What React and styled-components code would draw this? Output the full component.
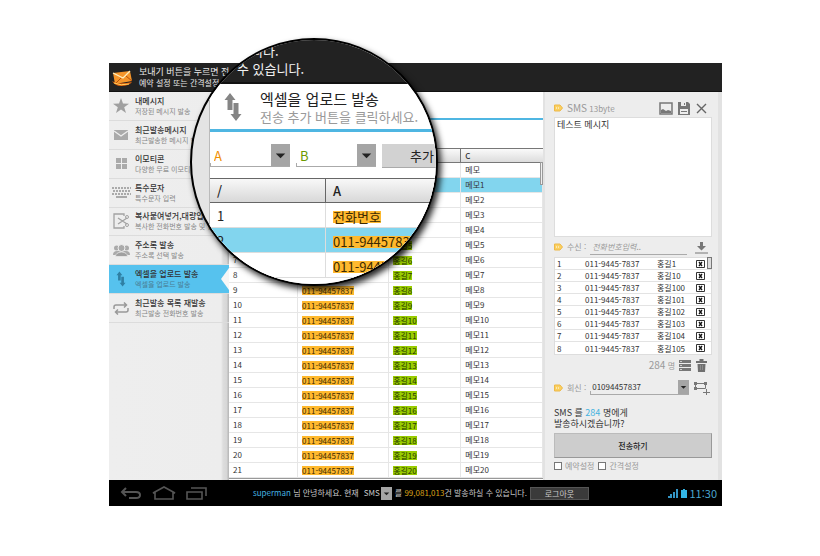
import React from "react";
import styled, { createGlobalStyle } from "styled-components";

const GlobalStyle = createGlobalStyle`
  * { box-sizing: border-box; }
  body { margin: 0; background: #fff; }
  body, button, input, select, textarea {
    font-family: "Noto Sans CJK KR", "Noto Sans", sans-serif;
    font-size: 8px;
    line-height: 12px;
  }
  button, input, select, textarea { margin: 0; padding: 0; border: 0; border-radius: 0; color: inherit; }
  button { cursor: pointer; background: none; }
`;

const Page = styled.div`
  padding: 63px 98px 48px 109px;
`;
const Device = styled.div`
  position: relative;
  color: #333;
`;
const TopBar = styled.header`
  display: flex;
  align-items: center;
  gap: 6px;
  height: 29px;
  padding: 0 3px;
  background: #222;
  border-bottom: 1px solid #111;
  color: #e8e8e8;
  p { margin: 0; line-height: 11px; }
  p:first-child { font-size: 9px; }
`;
const Body = styled.div`
  display: grid;
  grid-template-columns: 120px minmax(0, 1fr) 179px;
  min-height: 388px;
`;

/* Sidebar */
const Sidebar = styled.nav`
  background: linear-gradient(90deg, #eee 0, #ededed 112px, #ddd 114px, #d6d6d6 118px, #bbb 119px);
`;
const Menu = styled.ul`
  display: grid;
  grid-template-rows: repeat(8, 1fr);
  height: 231px;
  margin: 0;
  padding: 0;
  list-style: none;
`;
const MenuItem = styled.li`
  position: relative;
  overflow: hidden;
  border-bottom: 1px solid #dcdcdc;
  background: ${(p) => (p.$active ? "#56c2ee" : "transparent")};
  ${(p) => p.$active && `
    &::after {
      content: "";
      position: absolute;
      right: 0;
      top: 3px;
      border: solid transparent;
      border-width: 11px 8px 11px 0;
      border-right-color: #f6f6f6;
    }
  `}
`;
const MenuLink = styled.a`
  display: grid;
  grid-template-columns: 20px 1fr;
  gap: 4px;
  align-items: center;
  height: 100%;
  padding: 0 8px 0 2px;
  color: #333;
  text-decoration: none;
  white-space: nowrap;
  svg { justify-self: center; }
  strong, small { display: block; line-height: 11px; }
  strong { font-size: 8px; font-weight: 500; }
  small { font-size: 7px; color: ${(p) => (p.$active ? "#4a7d94" : "#888")}; }
`;

/* Sheet */
const Main = styled.main`
  background: #fff;
`;
const SheetHead = styled.div`
  height: 28px;
  border-bottom: 2px solid #4fb6e2;
`;
const SheetTools = styled.div`
  height: 28px;
`;
const Sheet = styled.table`
  width: 100%;
  table-layout: fixed;
  border-collapse: separate;
  border-spacing: 0;
  border-bottom: 1px solid #999;
  th {
    height: 15px;
    padding: 0 0 0 4px;
    border-top: 1px solid #777;
    border-bottom: 1px solid #777;
    border-right: 1px solid #777;
    background: linear-gradient(#fafafa, #dcdcdc);
    text-align: left;
    font-size: 8px;
    line-height: 12px;
    font-weight: 500;
  }
  th:last-child { border-right: 0; }
  td {
    height: 15px;
    padding: 0 0 0 4px;
    border-right: 1px solid #e6e6e6;
    border-bottom: 1px solid #e6e6e6;
    line-height: 12px;
    white-space: nowrap;
  }
`;
const Row = styled.tr`
  background: ${(p) => (p.$selected ? "#82d5ee" : "#fff")};
`;
const Mark = styled.span`
  display: inline-block;
  line-height: ${(p) => (p.$large ? "12px" : "9px")};
  vertical-align: middle;
  background: ${(p) => (p.$green ? "#99cc00" : "#ffb92e")};
  color: ${(p) => (p.$green ? "#263800" : "#3c2900")};
`;
const Thumb = styled.span`
  position: absolute;
  right: 179px;
  top: 99px;
  width: 3px;
  height: 23px;
  background: #eee;
  border: 1px solid #999;
`;

/* Composer */
const Composer = styled.aside`
  display: flex;
  flex-direction: column;
  padding: 7px 6px 0 9px;
  border-left: 2px solid #e2e2e2;
  border-right: 4px solid #e2e2e2;
  background: #ededed;
  color: #999;
`;
const Line = styled.div`
  display: flex;
  align-items: center;
  gap: 4px;
  height: ${(p) => p.$h}px;
  padding-right: ${(p) => p.$end || 0}px;
  flex: none;
  white-space: nowrap;
`;
const Push = styled.span`
  margin-left: auto;
`;
const Size = styled.span`
  font-size: ${(p) => p.$px}px;
`;
const IconButton = styled.button`
  display: flex;
  color: #777;
`;
const Message = styled.textarea`
  height: 120px;
  padding: 0 2px;
  border: 1px solid #ddd;
  background: #fff;
  color: #333;
  font-size: 9px;
  line-height: 13px;
  resize: none;
`;
const Field = styled.div`
  flex: 1;
  display: flex;
  height: 15px;
  margin-right: 4px;
  border-bottom: 1px solid #aaa;
  color: #333;
  input { flex: 1; min-width: 0; padding-left: 2px; background: none; }
  input::placeholder { color: #999; font-style: italic; }
`;
const Recipients = styled.table`
  border: 1px solid #ddd;
  border-spacing: 0;
  table-layout: fixed;
  background: #fff;
  color: #333;
  td { height: 12px; padding: 0 0 0 2px; line-height: 11px; border-bottom: 1px solid #e3e3e3; }
  tr:last-child td { border-bottom: 0; }
`;
const ListBox = styled.div`
  position: relative;
  display: grid;
  &::after {
    content: "";
    position: absolute;
    right: 0;
    top: 0;
    width: 3px;
    height: 10px;
    border: 1px solid #777;
    background: #ddd;
  }
`;
const Remove = styled.button`
  display: block;
  svg { display: block; }
`;
const Ask = styled.p`
  margin: 7px 0 4px;
  color: #333;
  font-size: 9px;
  line-height: 11px;
`;
const Accent = styled.span`
  color: ${(p) => (p.$gold ? "#d9a017" : "#45b3e0")};
`;
const SendButton = styled.button`
  height: 25px;
  flex: none;
  border: 1px solid #bbb;
  border-right-color: #999;
  border-bottom-color: #999;
  background: #cdcdcd;
  color: #222;
  font-weight: 500;
`;
const Check = styled.label`
  display: flex;
  align-items: center;
  gap: 3px;
  input { appearance: none; width: 8px; height: 8px; border: 1px solid #777; background: #fff; }
`;

/* Drop-down with a square arrow block */
const DropBox = styled.span`
  position: relative;
  display: flex;
  flex: ${(p) => (p.$w ? "none" : 1)};
  width: ${(p) => (p.$w ? `${p.$w}px` : "auto")};
  height: ${(p) => p.$h}px;
  border-bottom: ${(p) => (p.$line ? "1px solid #aaa" : "0")};
  &::before {
    content: "";
    position: absolute;
    left: 0;
    bottom: 0;
    width: 1px;
    height: 3px;
    background: #aaa;
  }
  select {
    flex: 1;
    min-width: 0;
    width: 100%;
    appearance: none;
    padding-left: ${(p) => p.$pad}px;
    background: none;
    color: ${(p) => p.$color};
    font-size: ${(p) => p.$font}px;
    line-height: ${(p) => p.$font + 4}px;
  }
  svg {
    position: absolute;
    right: 0;
    top: 0;
    height: 100%;
    width: ${(p) => p.$arrow}px;
    background: #a5a5a5;
    pointer-events: none;
  }
`;

/* System bar */
const SystemBar = styled.footer`
  display: flex;
  align-items: center;
  height: 26px;
  padding: 0 5px 0 11px;
  background: #000;
  color: #c8c8c8;
  white-space: nowrap;
`;
const NavKeys = styled.div`
  display: flex;
  gap: 10px;
  width: 133px;
  flex: none;
`;
const Status = styled.div`
  display: flex;
  align-items: center;
`;
const SmsPick = styled.span`
  display: flex;
  align-items: center;
  gap: 1px;
  margin: 0 3px 0 5px;
`;
const LogoutButton = styled.button`
  width: 59px;
  height: 13px;
  margin-left: 3px;
  border: 1px solid #555;
  background: #3a3a3a;
  line-height: 11px;
`;
const Tray = styled.div`
  display: flex;
  align-items: center;
  gap: 3px;
  margin-left: auto;
  color: #4aa6cf;
  font-size: 11px;
`;

/* Magnifier */
const Lens = styled.section`
  position: absolute;
  left: 81px;
  top: -25px;
  width: 248px;
  height: 248px;
  overflow: hidden;
  border: 2px solid #000;
  border-radius: 50%;
  background: #e4e4e4;
  box-shadow: 3px 4px 6px rgba(0, 0, 0, 0.85);
  color: #222;
  font-size: 13px;
`;
const LensBar = styled.div`
  height: 44px;
  padding: 2px 0 0 45px;
  background: #222;
  border-bottom: 2px solid #111;
  color: #f2f2f2;
  p { margin: 0; line-height: 18px; }
  p:first-child { padding-left: 14px; }
`;
const LensPanel = styled.div`
  margin-left: 17px;
  border-left: 1px solid #bbb;
  background: #fff;
`;
const LensTitle = styled.div`
  display: flex;
  gap: 17px;
  height: 48px;
  padding: 6px 0 0 13px;
  border-bottom: 3px solid #4fb6e2;
  white-space: nowrap;
  svg { margin-top: 2px; }
  h2 { margin: 0; font-size: 15px; line-height: 18px; font-weight: 400; }
  p { margin: 0; line-height: 18px; color: #999; }
`;
const LensTools = styled.div`
  display: flex;
  gap: 6px;
  height: 46px;
  padding-top: 12px;
`;
const AddButton = styled.button`
  flex: none;
  width: 80px;
  height: 24px;
  background: #d2d2d2;
  border-bottom: 1px solid #aaa;
  font-size: 13px;
`;
const LensTable = styled.table`
  width: 100%;
  table-layout: fixed;
  border-spacing: 0;
  th {
    height: 25px;
    padding: 0 0 0 7px;
    border: solid #666;
    border-width: 1px 1px 1px 0;
    background: linear-gradient(#f8f8f8, #d8d8d8);
    font-size: 13px;
    font-weight: 500;
    line-height: 16px;
    text-align: left;
  }
  td {
    height: 25px;
    padding: 1px 0 0 7px;
    border-right: 1px solid #ddd;
    border-bottom: 1px solid #ddd;
    font-size: 13px;
    line-height: 16px;
    white-space: nowrap;
  }
`;

const LensFill = styled.div`
  height: 40px;
`;

const Svg = ({ w, h, children, ...rest }) => (
  <svg width={w} height={h} viewBox={`0 0 ${w} ${h}`} fill="none" aria-hidden="true" {...rest}>{children}</svg>
);

const Arrow = () => (
  <svg viewBox="0 0 12 12" aria-hidden="true"><path d="M3 5h6L6 8z" fill="#222" /></svg>
);
const SwapIcon = ({ w = 10, h = 16, color = "#2f7fa3" }) => (
  <svg width={w} height={h} viewBox="0 0 18 30" aria-hidden="true">
    <path d="M6 1l5.500 7H8.500v10h-5V8H.5zM12 29l-5.500-7h3V11h5v11h3z" fill={color} />
  </svg>
);
const Tag = () => (
  <Svg w={9} h={8}><path d="M0.500 1h5.500l2.500 3-2.500 3H.5z" fill="#fbd05f" stroke="#edb94a" /><path d="M2 4h3" stroke="#fff" strokeDasharray="1 1" /></Svg>
);

const menuIcons = {
  star: <Svg w={16} h={15}><path d="M8 0l2 5.500 6 .2-4.800 3.500L13 15l-5-3.400L3 15l1.800-5.800L0 5.700l6-.2z" fill="#a0a0a0" /></Svg>,
  mail: <Svg w={14} h={10}><path d="M0 0h14v10H0z" fill="#aaa" /><path d="M0 1l7 5 7-5" stroke="#eee" strokeWidth="1.400" /></Svg>,
  grid: <Svg w={11} h={11}><path d="M0 0h5v5H0zM6 0h5v5H6zM0 6h5v5H0zM6 6h5v5H6z" fill="#aaa" /></Svg>,
  keys: <Svg w={19} h={11}><path d="M0 1h19M1 4h18M0 7h19" stroke="#aaa" strokeWidth="2" strokeDasharray="2 1" /><path d="M4 10h11" stroke="#aaa" strokeWidth="2" /></Svg>,
  cut: <Svg w={16} h={16} stroke="#a2a2a2"><path d="M11 3V1H1v14h10v-2M5 5l9 6M5 11l9-6" strokeWidth="1.300" /><circle cx="14" cy="4" r="1.500" /><circle cx="14" cy="12" r="1.500" /></Svg>,
  people: <Svg w={17} h={13}><circle cx="3.500" cy="4" r="2.500" fill="#aaa" /><circle cx="13.500" cy="4" r="2.500" fill="#aaa" /><path d="M0 11q0-4 4-4h9q4 0 4 4z" fill="#aaa" /><circle cx="8.500" cy="4" r="3.500" fill="#aaa" stroke="#eee" /><path d="M2.500 12.500q0-4 6-4.500 6 .5 6 4.500z" fill="#a0a0a0" stroke="#eee" strokeWidth=".7" /></Svg>,
  swap: <SwapIcon />,
  repeat: <Svg w={16} h={13} stroke="#999" strokeWidth="1.500"><path d="M1 7V5q0-2 2-2h10M11 .5L13.500 3 11 5.500M15 6v2q0 2-2 2H3M5 7.500L2.500 10 5 12.500" /></Svg>,
};

const menu = [
  ["star", "내메시지", "저장된 메시지 발송"],
  ["mail", "최근발송메시지", "최근발송한 메시지 발송"],
  ["grid", "이모티콘", "다양한 무료 이모티콘"],
  ["keys", "특수문자", "특수문자 입력"],
  ["cut", "복사붙여넣거,대량입", "복사한 전화번호 발송 및 입"],
  ["people", "주소록 발송", "주소록 선택 발송"],
  ["swap", "엑셀을 업로드 발송", "엑셀을 업로드 발송"],
  ["repeat", "최근발송 목록 재발송", "최근발송 전화번호 발송"],
];

const rows = Array.from({ length: 21 }, (_, i) => ({
  phone: i ? "011-94457837" : "전화번호",
  name: i ? `홍길${i}` : "이름",
  memo: i ? `메모${i}` : "메모",
}));
rows.forEach((r, i) => { r.name = i > 0 ? `홍길${i}` : r.name; });

const recipients = [1, 10, 100, 101, 102, 103, 104, 105];

function SideMenu() {
  return (
    <Sidebar>
      <Menu>
        {menu.map(([icon, title, note]) => (
          <MenuItem key={icon} $active={icon === "swap"}>
            <MenuLink href="#" $active={icon === "swap"}>
              {menuIcons[icon]}
              <span><strong>{title}</strong><small>{note}</small></span>
            </MenuLink>
          </MenuItem>
        ))}
      </Menu>
    </Sidebar>
  );
}

function ExcelSheet() {
  return (
    <Main>
      <SheetHead />
      <SheetTools />
      <Sheet>
        <colgroup><col width="22%" /><col width="29%" /><col width="23%" /><col width="26%" /></colgroup>
        <thead><tr><th>/</th><th>A</th><th>B</th><th>C</th></tr></thead>
        <tbody>
          {rows.map((r, i) => (
            <Row key={i} $selected={i === 1}>
              <td>{i + 1}</td>
              <td><Mark>{r.phone}</Mark></td>
              <td><Mark $green>{r.name}</Mark></td>
              <td>{r.memo}</td>
            </Row>
          ))}
        </tbody>
      </Sheet>
    </Main>
  );
}

function MessageComposer() {
  return (
    <Composer>
      <Line $h={18} $end={4}>
        <Tag />
        <label htmlFor="message"><Size $px={10}>SMS</Size> 13byte</label>
        <Push />
        <IconButton aria-label="이미지">
          <Svg w={14} h={13}><path d="M1 1h12v11H1z" stroke="#777" strokeWidth="1.500" /><path d="M2 11V8l2-1 3 2 2-1 3 1v2z" fill="#777" /></Svg>
        </IconButton>
        <IconButton aria-label="저장">
          <Svg w={14} h={13}><path d="M1 0h10l2 2v11H1z" fill="#777" /><path d="M4 0h5v4H4zM3 7h8v5H3z" fill="#ededed" /><path d="M7 1h1v2H7zM4 9h6v1H4z" fill="#777" /></Svg>
        </IconButton>
        <IconButton aria-label="닫기">
          <Svg w={13} h={13}><path d="M2 2l9 9M11 2l-9 9" stroke="#666" strokeWidth="1.400" /></Svg>
        </IconButton>
      </Line>
      <Message id="message" defaultValue="테스트 메시지" />
      <Line $h={20} $end={4}>
        <Tag />
        <label htmlFor="receiver">수신 :</label>
        <Field><input id="receiver" placeholder="전화번호입력.." /></Field>
        <IconButton aria-label="추가">
          <Svg w={13} h={13}><path d="M5 1h3v4h3L6.500 9.500 2 5h3z" fill="#777" /><path d="M0 12h13" stroke="#777" /></Svg>
        </IconButton>
      </Line>
      <ListBox>
        <Recipients>
          <colgroup><col width="28" /><col width="72" /><col /><col width="17" /></colgroup>
          <tbody>
            {recipients.map((n, i) => (
              <tr key={n}>
                <td>{i + 1}</td>
                <td>011-9445-7837</td>
                <td>홍길{n}</td>
                <td>
                  <Remove aria-label={`홍길${n} 삭제`}>
                    <Svg w={9} h={8}><path d="M.5.5h8v7h-8z" stroke="#333" /><path d="M3 2l3 4M6 2L3 6" stroke="#111" strokeWidth="1.300" /></Svg>
                  </Remove>
                </td>
              </tr>
            ))}
          </tbody>
        </Recipients>
      </ListBox>
      <Line $h={20} $end={4}>
        <Push />
        <span><Size $px={10}>284</Size> 명</span>
        <IconButton aria-label="목록">
          <Svg w={12} h={11}><path d="M0 1.500h12M0 5.500h12M0 9.500h12" stroke="#777" strokeWidth="3" /><path d="M0 3.500h12M0 7.500h12" stroke="#ededed" /><path d="M1 1.500h2M1 5.500h2M1 9.500h2" stroke="#ccc" /></Svg>
        </IconButton>
        <IconButton aria-label="비우기">
          <Svg w={13} h={13}><path d="M1 2h11v2H1zM4.500 0h4v2h-4zM2.500 5h8l-.5 8h-7z" fill="#707070" /><path d="M5.500 6v5M7.500 6v5" stroke="#8c8c8c" /></Svg>
        </IconButton>
      </Line>
      <Line $h={25} $end={2}>
        <Tag />
        <label htmlFor="reply">회신 :</label>
        <DropBox $line $h={15} $pad={2} $font={8} $color="#333" $arrow={11}>
          <select id="reply"><option>01094457837</option></select>
          <Arrow />
        </DropBox>
        <IconButton aria-label="번호 추가">
          <Svg w={17} h={14} stroke="#777"><path d="M2.500 2.500h10v5h-10z" /><path d="M1 1h3v3H1zM11 1h3v3h-3zM1 6h3v3H1z" fill="#777" stroke="none" /><path d="M13.500 8v6M10 11.500h7" /></Svg>
        </IconButton>
      </Line>
      <Ask>SMS 를 <Accent>284</Accent> 명에게<br />발송하시겠습니까?</Ask>
      <SendButton>전송하기</SendButton>
      <Line $h={16}>
        <Check><input type="checkbox" />예약설정</Check>
        <Check><input type="checkbox" />간격설정</Check>
      </Line>
    </Composer>
  );
}

function Magnifier() {
  return (
    <Lens>
      <LensBar><p>니다.</p><p>수 있습니다.</p></LensBar>
      <LensPanel>
        <LensTitle>
          <SwapIcon w={20} h={30} color="#858585" />
          <div><h2>엑셀을 업로드 발송</h2><p>전송 추가 버튼을 클릭하세요.</p></div>
        </LensTitle>
        <LensTools>
          <DropBox $line $w={80} $h={23} $pad={4} $font={13} $color="#f09000" $arrow={19}>
            <select aria-label="전화번호 열"><option>A</option></select><Arrow />
          </DropBox>
          <DropBox $line $w={80} $h={23} $pad={4} $font={13} $color="#6c9a00" $arrow={19}>
            <select aria-label="이름 열"><option>B</option></select><Arrow />
          </DropBox>
          <AddButton>추가</AddButton>
        </LensTools>
        <LensTable>
          <colgroup><col width="116" /><col /></colgroup>
          <thead><tr><th>/</th><th>A</th></tr></thead>
          <tbody>
            {rows.slice(0, 3).map((r, i) => (
              <Row key={i} $selected={i === 1}>
                <td>{i + 1}</td>
                <td><Mark $large>{r.phone}</Mark></td>
              </Row>
            ))}
          </tbody>
        </LensTable>
        <LensFill />
      </LensPanel>
    </Lens>
  );
}

export default function App() {
  return (
    <Page lang="ko">
      <GlobalStyle />
      <Device>
        <TopBar>
          <Svg w={21} h={20}>
            <path d="M1 6l17-2 2 10-17 3z" fill="#f5952a" />
            <path d="M1 6l10 5 7-7" stroke="#fff0c0" strokeWidth="1.300" />
            <path d="M3 17l6-6M20 14l-6-5" stroke="#b84f08" />
            <path d="M0 14q6 4 20 1-3 4-11 4-6 0-9-5z" fill="#e2620c" />
            <path d="M2 16q7 3 15 1" stroke="#ffd25e" />
          </Svg>
          <div>
            <p>보내기 버튼을 누르면 전</p>
            <p>예약 설정 또는 간격설정</p>
          </div>
        </TopBar>
        <Body>
          <SideMenu />
          <ExcelSheet />
          <MessageComposer />
        </Body>
        <SystemBar>
          <NavKeys>
            <IconButton aria-label="뒤로"><Svg w={22} h={14} stroke="#555" strokeWidth="2"><path d="M6 2L2 6l4 4M2 6h14q4 0 4 3 0 3-4 3H9" /></Svg></IconButton>
            <IconButton aria-label="홈"><Svg w={24} h={14} stroke="#555" strokeWidth="1.600"><path d="M1 7l11-6 11 6h-2v6H3V7z" /></Svg></IconButton>
            <IconButton aria-label="최근 앱"><Svg w={22} h={14} stroke="#555" strokeWidth="1.600"><path d="M1 6h15v7H1zM5 2h15v8" /></Svg></IconButton>
          </NavKeys>
          <Status>
            <span><Accent>superman</Accent> 님 안녕하세요. 현재</span>
            <SmsPick>
              <label htmlFor="kind">SMS</label>
              <DropBox $w={11} $h={13} $pad={11} $font={8} $color="#000" $arrow={11}>
                <select id="kind"><option>SMS</option></select><Arrow />
              </DropBox>
            </SmsPick>
            <span>를 <Accent $gold>99,081,013</Accent>건 발송하실 수 있습니다.</span>
            <LogoutButton>로그아웃</LogoutButton>
          </Status>
          <Tray>
            <Svg w={10} h={9}><path d="M0 7h2v2H0zM2 5h2v4H2zM5 3h2v6H5zM8 0h2v9H8z" fill="#3394c4" /></Svg>
            <Svg w={6} h={9}><path d="M0 1h2V0h2v1h2v8H0z" fill="#33b5e5" /></Svg>
            <time>11:30</time>
          </Tray>
        </SystemBar>
        <Thumb />
        <Magnifier />
      </Device>
    </Page>
  );
}
